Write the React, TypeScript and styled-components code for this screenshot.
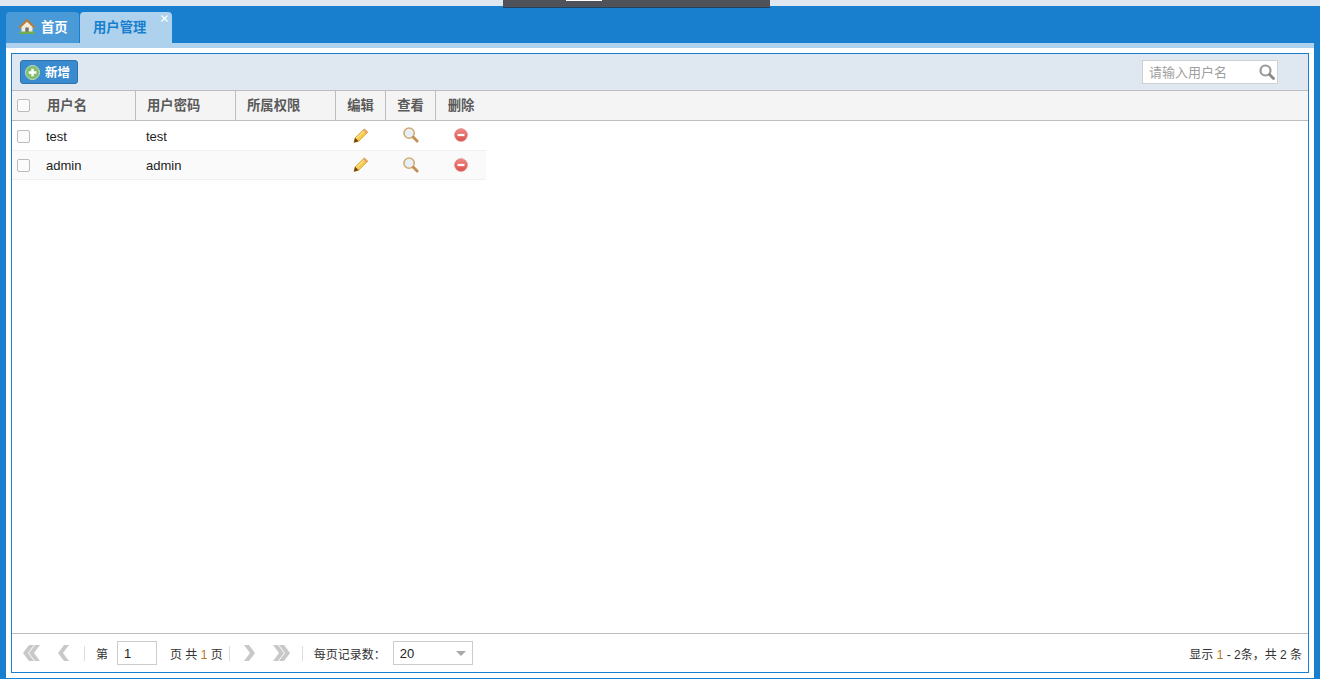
import React from 'react';
import styled, {createGlobalStyle} from 'styled-components';

const GlobalStyle = createGlobalStyle`
    html, body {
        margin: 0;
        padding: 0;
        height: 100%;
        overflow: hidden;
    }
    body {
        font-family: "Liberation Sans", "Noto Sans CJK SC", sans-serif;
        font-size: 13px;
        color: #333;
    }
`;

const Page = styled.div`
    box-sizing: border-box;
    height: 100vh;
    padding-top: 6px;
    background-color: #dfe8f1;
    display: flex;
    flex-direction: column;
`;

const DragHandle = styled.div`
    position: absolute;
    top: 0;
    left: 503px;
    width: 267px;
    height: 8px;
    background-color: #4f5258;
    border-bottom: 1px solid #23405f;
    box-sizing: border-box;

    &::before {
        content: '';
        position: absolute;
        top: 0;
        left: 63px;
        width: 36px;
        height: 1px;
        background-color: #fff;
    }
`;

const Frame = styled.div`
    flex: 1;
    min-height: 0;
    display: flex;
    flex-direction: column;
    padding: 6px 6px 1px;
    background-color: #177fcd;
`;

const TabBar = styled.div`
    display: flex;
    gap: 1px;
    height: 31px;
`;

const Tab = styled.div<{$active?: boolean}>`
    position: relative;
    box-sizing: border-box;
    display: flex;
    align-items: center;
    width: ${({$active}) => ($active ? '92px' : '73px')};
    padding-left: ${({$active}) => ($active ? '13px' : '12px')};
    padding-bottom: 3px;
    gap: 5px;
    border-radius: 4px 4px 0 0;
    font-size: 13.33px;
    font-weight: 700;
    color: ${({$active}) => ($active ? '#177fcd' : '#fff')};
    background-color: ${({$active}) => ($active ? '#aed2ee' : '#4a9ad7')};
`;

const TabClose = styled.span`
    position: absolute;
    top: 2px;
    right: 3px;
    display: flex;
`;

const Content = styled.div`
    flex: 1;
    min-height: 0;
    display: flex;
    padding: 5px;
    background-color: #fff;
    border-top: 5px solid #aed2ee;
`;

const Panel = styled.div`
    flex: 1;
    min-width: 0;
    display: flex;
    flex-direction: column;
    border: 1px solid #177fcd;
`;

const Toolbar = styled.div`
    flex: none;
    box-sizing: border-box;
    height: 36px;
    padding: 0 30px 0 8px;
    display: flex;
    align-items: center;
    justify-content: space-between;
    background-color: #dfe8f1;
`;

const AddButton = styled.button`
    box-sizing: border-box;
    width: 58px;
    height: 24px;
    padding: 0 0 0 4px;
    display: flex;
    align-items: center;
    gap: 5px;
    border: 1px solid #2a72b0;
    border-radius: 3px;
    background-color: #3a8ad0;
    color: #fff;
    font-family: inherit;
    font-size: 12.5px;
    font-weight: 700;
`;

const RaisedLabel = styled.span`
    padding-bottom: 2px;
`;

const SearchBox = styled.div`
    box-sizing: border-box;
    width: 136px;
    height: 24px;
    padding: 0 2px 0 6px;
    display: flex;
    align-items: center;
    justify-content: space-between;
    background-color: #fff;
    border: 1px solid #d0d0d0;
    color: #a0a0a0;
    font-size: 13px;
`;

const HeaderRow = styled.div`
    flex: none;
    box-sizing: border-box;
    height: 31px;
    display: flex;
    background-color: #f4f4f4;
    border-top: 1px solid #bdbdbd;
    border-bottom: 1px solid #bdbdbd;
`;

const HeadCell = styled.div<{$width: number; $center?: boolean}>`
    box-sizing: border-box;
    width: ${({$width}) => $width}px;
    display: flex;
    align-items: center;
    justify-content: ${({$center}) => ($center ? 'center' : 'flex-start')};
    padding-left: ${({$center}) => ($center ? '0' : '11px')};
    padding-bottom: 2px;
    border-right: 1px solid #bdbdbd;
    font-size: 13.33px;
    font-weight: 700;
    color: #5a5a5a;

    &:last-child {
        border-right: none;
    }
`;

const CheckCell = styled.div<{$lower?: boolean}>`
    width: 24px;
    flex: none;
    display: flex;
    align-items: center;
    padding-left: 5px;
    padding-top: ${({$lower}) => ($lower ? '2px' : '0')};
    box-sizing: border-box;
`;

const CheckMark = styled.span`
    box-sizing: border-box;
    display: block;
    width: 13px;
    height: 13px;
    border: 1px solid #bbb;
    border-radius: 2px;
    background-color: #fbfbfb;
`;

const Body = styled.div`
    flex: 1;
    min-height: 0;
`;

const Row = styled.div<{$alt?: boolean}>`
    box-sizing: border-box;
    width: 474px;
    height: ${({$alt}) => ($alt ? '29px' : '30px')};
    display: flex;
    border-bottom: 1px solid #f0f0f0;
    background-color: ${({$alt}) => ($alt ? '#fafafa' : '#fff')};
`;

const Cell = styled.div<{$width: number; $lower?: boolean}>`
    box-sizing: border-box;
    width: ${({$width}) => $width}px;
    display: flex;
    align-items: center;
    padding: ${({$lower}) => ($lower ? '2px' : '0')} 0 0 10px;
    font-size: 13px;
    color: #222;
`;

const IconCell = styled.div`
    box-sizing: border-box;
    width: 50px;
    display: flex;
    align-items: center;
    justify-content: center;
    padding-bottom: 1px;
`;

const Footer = styled.div`
    flex: none;
    box-sizing: border-box;
    height: 39px;
    padding: 0 6px 0 11px;
    display: flex;
    align-items: center;
    border-top: 1px solid #bdbdbd;
    font-size: 12px;
`;

const Pager = styled.div`
    display: flex;
    align-items: center;
`;

const PageArrow = styled.span<{$left: number}>`
    display: flex;
    margin-left: ${({$left}) => $left}px;
`;

const Divider = styled.span<{$left: number}>`
    width: 1px;
    height: 15px;
    margin-left: ${({$left}) => $left}px;
    background-color: #ddd;
`;

const PagerText = styled.span<{$left: number}>`
    margin-left: ${({$left}) => $left}px;
    color: #333;
    white-space: nowrap;
`;

const Accent = styled.span`
    color: #b5791c;
`;

const PageInput = styled.div<{$left: number; $width: number}>`
    box-sizing: border-box;
    display: flex;
    align-items: center;
    justify-content: space-between;
    width: ${({$width}) => $width}px;
    height: 24px;
    margin-left: ${({$left}) => $left}px;
    padding: 0 6px;
    border: 1px solid #ccc;
    color: #222;
    font-size: 13px;
`;

const Caret = styled.span`
    width: 0;
    height: 0;
    border-left: 5px solid transparent;
    border-right: 5px solid transparent;
    border-top: 5px solid #a8a8a8;
`;

const Summary = styled.div`
    margin-left: auto;
    color: #333;
    white-space: nowrap;
`;

const HomeIcon = () => (
    <svg width="18" height="17" viewBox="0 0 18 17">
        <path d="M0.5 9.5 9 1l8.5 8.5-1.4 1L9 4.2 1.9 10.500z" fill="#c98a3e"/>
        <path d="M9 1 0.5 9.500 3 9.500 9 3.600 15 9.500h2.500z" fill="#b8782e"/>
        <path d="M3.500 9 9 3.800 14.500 9v5h-11z" fill="#f5ead8"/>
        <path d="M7.300 9.500h3.400V14H7.300z" fill="#66747f"/>
        <path d="M1.500 13.500h15V16h-15z" fill="#6fae4e"/>
    </svg>
);

const PlusIcon = () => (
    <svg width="15" height="15" viewBox="0 0 15 15">
        <circle cx="7.500" cy="7.500" r="7" fill="#83bd70" stroke="#c5dfb9"/>
        <path d="M6.300 3.700h2.400v2.600h2.600v2.400H8.700v2.600H6.300V8.700H3.700V6.300h2.600z" fill="#fff"/>
    </svg>
);

const SearchGlyph = () => (
    <svg width="16" height="16" viewBox="0 0 16 16">
        <circle cx="6.500" cy="6.500" r="5" fill="none" stroke="#9a9a9a" strokeWidth="2.200"/>
        <path d="M10.500 10.500 14.500 14.500" stroke="#8a8a8a" strokeWidth="2.800" strokeLinecap="round"/>
    </svg>
);

const PencilIcon = () => (
    <svg width="16" height="15" viewBox="0 0 17 16">
        <path d="M1 15.500 2.200 10.500 12 1l3.800 3.500L6 14.200z" fill="#f4cb4c" stroke="#cf9128" strokeWidth="0.700"/>
        <path d="M12 1l3.800 3.500-1.700 1.700-3.800-3.500z" fill="#eda06c"/>
        <path d="M1 15.500 2.200 10.500 6 14.200z" fill="#6b4312"/>
        <path d="M3.600 11.200 12 3.200" stroke="#fbeaa0" strokeWidth="1.100"/>
    </svg>
);

const LensIcon = () => (
    <svg width="16" height="16" viewBox="0 0 17 17">
        <circle cx="6.500" cy="6.500" r="5.500" fill="#e6f0f8" stroke="#d4aa70" strokeWidth="1.700"/>
        <path d="M11 11 15 15" stroke="#c48f52" strokeWidth="3" strokeLinecap="round"/>
    </svg>
);

const MinusIcon = () => (
    <svg width="14" height="14" viewBox="0 0 15 15">
        <defs>
            <linearGradient id="minus-fill" x1="0" y1="0" x2="0" y2="1">
                <stop offset="0" stopColor="#f08a84"/>
                <stop offset="1" stopColor="#dc4f4a"/>
            </linearGradient>
        </defs>
        <circle cx="7.500" cy="7.500" r="6.800" fill="url(#minus-fill)" stroke="#d9807a" strokeWidth="0.800"/>
        <path d="M3.800 6.300h7.400v2.400H3.800z" fill="#fff"/>
    </svg>
);

const CloseIcon = () => (
    <svg width="9" height="9" viewBox="0 0 9 9">
        <path d="M1.500 1.500 7.500 7.500M7.500 1.500 1.500 7.500" stroke="#fff" strokeWidth="1.200"/>
    </svg>
);

const Chevron = ({double, flip}: {double?: boolean; flip?: boolean}) => (
    <svg width={double ? 17 : 11} height="16" viewBox={`0 0 ${double ? 17 : 11} 16`}>
        <g fill="#c8c8c8" transform={flip ? `translate(${double ? 17 : 11} 0) scale(-1 1)` : undefined}>
            <path d="M6 0h5L5 8l6 8H6L0 8z"/>
            {double && <path d="M12 0h5l-6 8 6 8h-5L6 8z"/>}
        </g>
    </svg>
);

const columns = [
    {title: '用户名', width: 100},
    {title: '用户密码', width: 100},
    {title: '所属权限', width: 100},
];

const actions = [
    {title: '编辑', icon: <PencilIcon/>},
    {title: '查看', icon: <LensIcon/>},
    {title: '删除', icon: <MinusIcon/>},
];

const users = [
    {name: 'test', password: 'test', role: ''},
    {name: 'admin', password: 'admin', role: ''},
];

export default function App() {
    return (
        <Page>
            <GlobalStyle/>
            <DragHandle/>
            <Frame>
                <TabBar>
                    <Tab><HomeIcon/>首页</Tab>
                    <Tab $active>
                        用户管理
                        <TabClose><CloseIcon/></TabClose>
                    </Tab>
                </TabBar>
                <Content>
                    <Panel>
                        <Toolbar>
                            <AddButton><PlusIcon/><RaisedLabel>新增</RaisedLabel></AddButton>
                            <SearchBox><RaisedLabel>请输入用户名</RaisedLabel><SearchGlyph/></SearchBox>
                        </Toolbar>
                        <HeaderRow>
                            <CheckCell><CheckMark/></CheckCell>
                            {columns.map(col => (
                                <HeadCell key={col.title} $width={col.width}>{col.title}</HeadCell>
                            ))}
                            {actions.map(action => (
                                <HeadCell key={action.title} $width={50} $center>{action.title}</HeadCell>
                            ))}
                        </HeaderRow>
                        <Body>
                            {users.map((user, index) => {
                                const alt = index % 2 === 1;
                                return (
                                    <Row key={user.name} $alt={alt}>
                                        <CheckCell $lower={!alt}><CheckMark/></CheckCell>
                                        <Cell $width={100} $lower={!alt}>{user.name}</Cell>
                                        <Cell $width={100} $lower={!alt}>{user.password}</Cell>
                                        <Cell $width={100} $lower={!alt}>{user.role}</Cell>
                                        {actions.map(action => (
                                            <IconCell key={action.title}>{action.icon}</IconCell>
                                        ))}
                                    </Row>
                                );
                            })}
                        </Body>
                        <Footer>
                            <Pager>
                                <PageArrow $left={0}><Chevron double/></PageArrow>
                                <PageArrow $left={18}><Chevron/></PageArrow>
                                <Divider $left={15}/>
                                <PagerText $left={11}>第</PagerText>
                                <PageInput $left={9} $width={40}>1</PageInput>
                                <PagerText $left={13}>页 共 <Accent>1</Accent> 页</PagerText>
                                <Divider $left={6}/>
                                <PageArrow $left={14}><Chevron flip/></PageArrow>
                                <PageArrow $left={18}><Chevron double flip/></PageArrow>
                                <Divider $left={12}/>
                                <PagerText $left={11}>每页记录数：</PagerText>
                                <PageInput $left={7} $width={80}>20<Caret/></PageInput>
                            </Pager>
                            <Summary>显示 <Accent>1</Accent> - 2条，共 2 条</Summary>
                        </Footer>
                    </Panel>
                </Content>
            </Frame>
        </Page>
    );
}
